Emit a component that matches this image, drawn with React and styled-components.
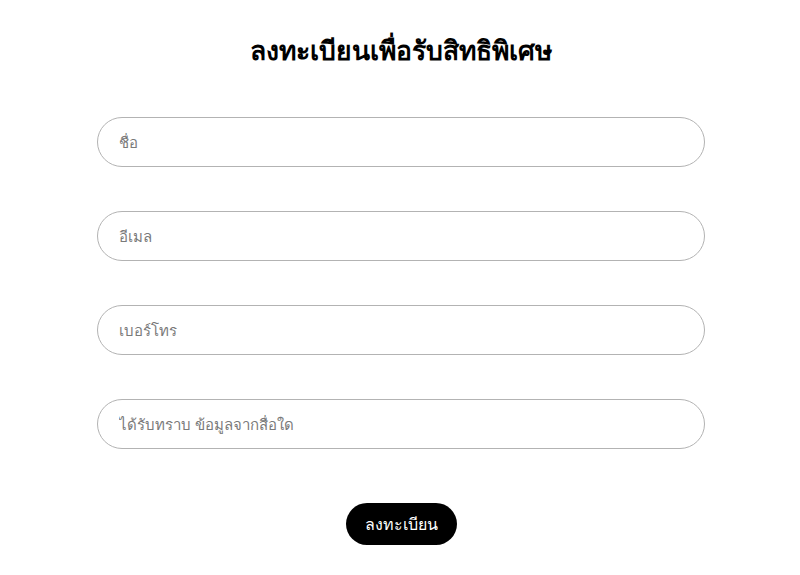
import React from "react";
import styled, { createGlobalStyle } from "styled-components";

const Global = createGlobalStyle`
  html, body { margin: 0; padding: 0; background: #fff; }
  body { font-family: "Noto Sans", "Liberation Sans", sans-serif; color: #000; }
  * { box-sizing: border-box; }
`;

const Page = styled.div`
  width: 800px;
  display: flex;
  flex-direction: column;
  align-items: center;
  padding-top: 31px;
  padding-left: 2px;
`;

const Title = styled.h1`
  margin: 0;
  font-size: 26.5px;
  font-weight: 700;
  line-height: 38px;
  color: #000;
`;

const Form = styled.form`
  margin-top: 48px;
  width: 608px;
  display: flex;
  flex-direction: column;
  gap: 44px;
`;

const Input = styled.input`
  width: 100%;
  height: 50px;
  border: 1px solid #b3b3b3;
  border-radius: 25px;
  padding: 0 21px;
  font-family: inherit;
  font-size: 15px;
  color: #333;
  background: #fff;
  outline: none;
  &::placeholder { color: #7a7a7a; }
`;

const Submit = styled.button`
  margin-top: 10px;
  align-self: center;
  width: 111px;
  height: 42px;
  border: none;
  border-radius: 21px;
  background: #000;
  color: #fff;
  font-family: inherit;
  font-size: 16px;
  font-weight: 400;
  cursor: pointer;
`;

export default function App() {
  return (
    <Page>
      <Global />
      <Title>ลงทะเบียนเพื่อรับสิทธิพิเศษ</Title>
      <Form onSubmit={(e) => e.preventDefault()}>
        <Input placeholder="ชื่อ" />
        <Input placeholder="อีเมล" />
        <Input placeholder="เบอร์โทร" />
        <Input placeholder="ได้รับทราบ ข้อมูลจากสื่อใด" />
        <Submit type="submit">ลงทะเบียน</Submit>
      </Form>
    </Page>
  );
}
